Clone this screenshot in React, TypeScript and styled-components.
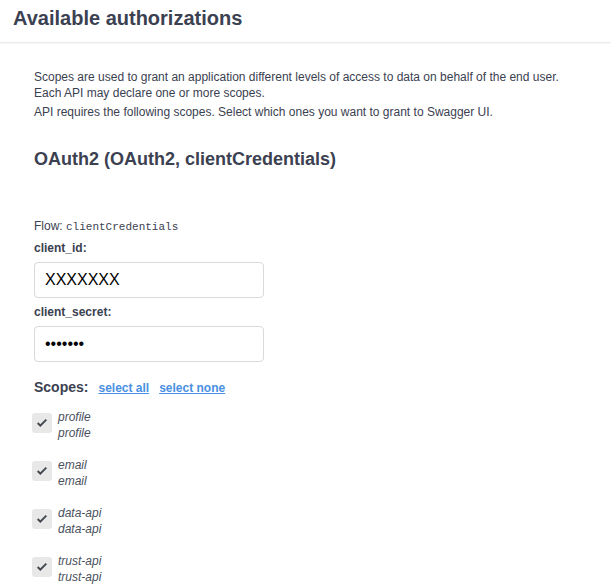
import React from "react";
import styled, { createGlobalStyle } from "styled-components";

const Global = createGlobalStyle`
  html, body { margin: 0; padding: 0; background: #fff; }
  body { font-family: "Liberation Sans", Arial, sans-serif; color: #3b4151; }
  * { box-sizing: border-box; }
`;

const Modal = styled.div`
  width: 611px;
  background: #fff;
`;

const Header = styled.div`
  padding: 7px 13px 12px;
  border-bottom: 1px solid #ebebeb;
  box-shadow: 0 1px 1px rgba(0, 0, 0, 0.03);
`;

const Title = styled.h3`
  margin: 0;
  font-size: 20px;
  line-height: 23px;
  font-weight: 700;
  color: #3b4151;
`;

const Body = styled.div`
  padding: 26px 34px 20px;
`;

const Desc = styled.p<{ $gap?: number }>`
  margin: ${(p) => p.$gap ?? 0}px 0 0;
  font-size: 12px;
  line-height: 16px;
  color: #3b4151;
`;

const SchemeTitle = styled.h4`
  margin: 29px 0 0;
  font-size: 18px;
  line-height: 21px;
  font-weight: 700;
  color: #3b4151;
`;

const Flow = styled.p`
  margin: 48px 0 0;
  font-size: 12px;
  line-height: 16px;
  color: #3b4151;
`;

const Code = styled.code`
  font-family: "Liberation Mono", "DejaVu Sans Mono", monospace;
  font-size: 11px;
  color: #3b4151;
`;

const Label = styled.label<{ $gap?: number }>`
  display: block;
  margin-top: ${(p) => p.$gap ?? 6}px;
  font-size: 12px;
  line-height: 16px;
  font-weight: 700;
  color: #3b4151;
`;

const Field = styled.input`
  display: block;
  margin-top: 6px;
  width: 230px;
  height: 36px;
  padding: 8px 10px;
  border: 1px solid #d9d9d9;
  border-radius: 4px;
  background: #fff;
  font-family: "Liberation Sans", Arial, sans-serif;
  font-size: 16px;
  color: #000;
  outline: none;
`;

const ScopesBar = styled.div`
  display: flex;
  align-items: baseline;
  gap: 10px;
  margin-top: 17px;
  line-height: 16px;
`;

const ScopesTitle = styled.span`
  font-size: 14px;
  font-weight: 700;
  color: #3b4151;
`;

const LinkButton = styled.a`
  font-size: 12px;
  font-weight: 700;
  color: #4990e2;
  text-decoration: underline;
  cursor: pointer;
`;

const ScopeList = styled.div`
  display: flex;
  flex-direction: column;
  gap: 16px;
  margin-top: 13px;
`;

const ScopeRow = styled.div`
  display: flex;
  align-items: flex-start;
  margin-left: -2px;
`;

const Box = styled.span`
  flex: none;
  width: 20px;
  height: 20px;
  margin: 4px 6px 0 0;
  border-radius: 3px;
  background: #e8e8e8;
  display: flex;
  align-items: center;
  justify-content: center;
`;

const ScopeText = styled.div`
  font-size: 12px;
  line-height: 16px;
  font-style: italic;
  color: #4b505c;
`;

const scopes = ["profile", "email", "data-api", "trust-api"];

const Check = () => (
  <svg width="10" height="8" viewBox="3 7 10 8">
    <path
      fill="#41474E"
      fillRule="evenodd"
      d="M6.333 15L3 11.667l1.333-1.334 2 2L11.667 7 13 8.333z"
    />
  </svg>
);

export default function App() {
  return (
    <Modal>
      <Global />
      <Header>
        <Title>Available authorizations</Title>
      </Header>
      <Body>
        <Desc>
          Scopes are used to grant an application different levels of access to data on behalf of the end user.
          <br />
          Each API may declare one or more scopes.
        </Desc>
        <Desc $gap={3}>API requires the following scopes. Select which ones you want to grant to Swagger UI.</Desc>
        <SchemeTitle>OAuth2 (OAuth2, clientCredentials)</SchemeTitle>
        <Flow>
          Flow: <Code>clientCredentials</Code>
        </Flow>
        <Label $gap={5}>client_id:</Label>
        <Field type="text" defaultValue="XXXXXXX" />
        <Label>client_secret:</Label>
        <Field type="password" defaultValue="1234567" />
        <ScopesBar>
          <ScopesTitle>Scopes:</ScopesTitle>
          <LinkButton>select all</LinkButton>
          <LinkButton>select none</LinkButton>
        </ScopesBar>
        <ScopeList>
          {scopes.map((s) => (
            <ScopeRow key={s}>
              <Box>
                <Check />
              </Box>
              <ScopeText>
                {s}
                <br />
                {s}
              </ScopeText>
            </ScopeRow>
          ))}
        </ScopeList>
      </Body>
    </Modal>
  );
}
